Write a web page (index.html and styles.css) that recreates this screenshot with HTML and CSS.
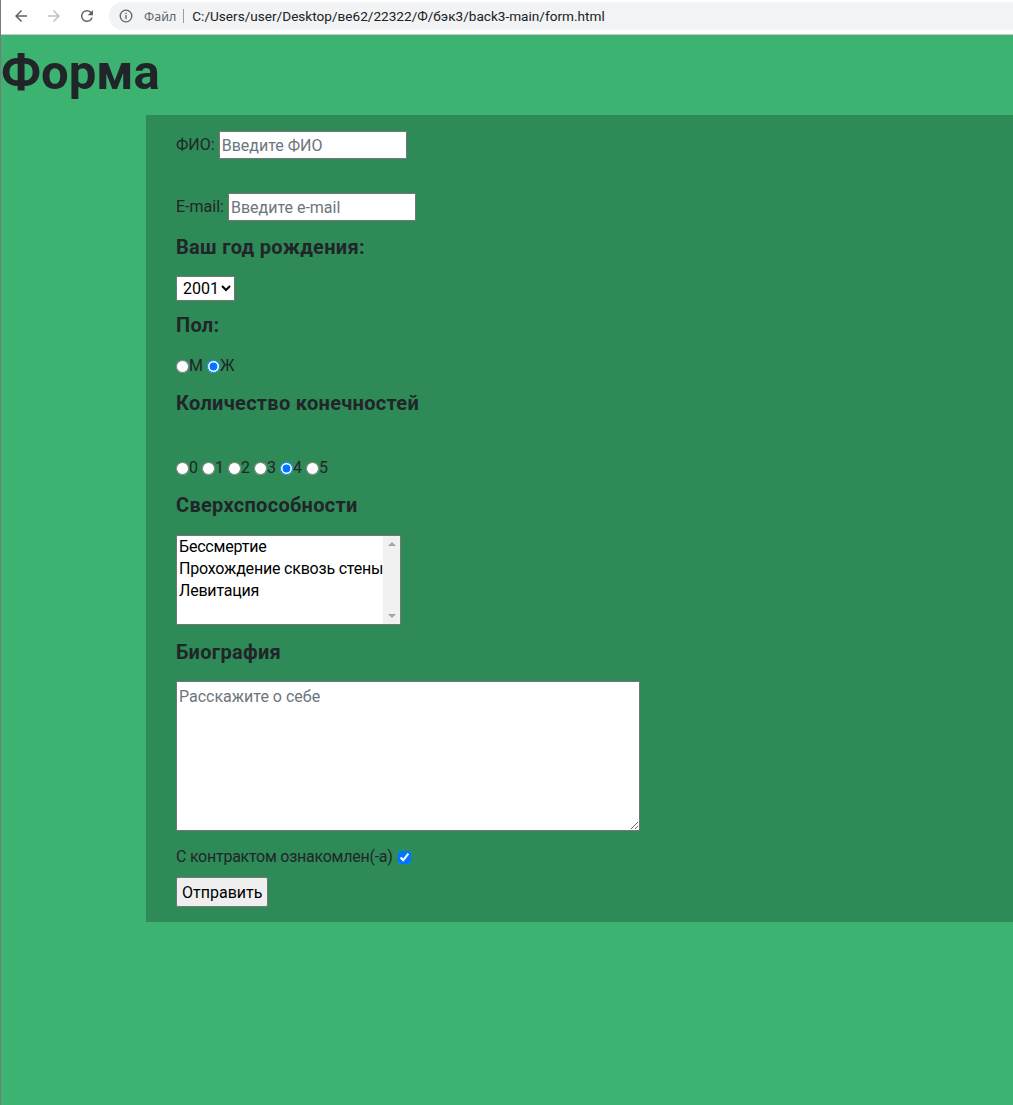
FILE: index.html
```html
<!DOCTYPE html>
<html lang="ru">
<head>
<meta charset="utf-8">
<title>Форма</title>
<link rel="stylesheet" href="styles.css">
</head>
<body>
<header class="toolbar">
  <div class="nav">
    <span class="nav-btn">
      <svg width="16" height="16" viewBox="0 0 16 16"><path d="M14 7.25H4.87l4.2-4.2L8 2 2 8l6 6 1.06-1.06-4.19-4.19H14z" fill="#5f6368"/></svg>
    </span>
    <span class="nav-btn">
      <svg width="16" height="16" viewBox="0 0 16 16"><path d="M2 7.25h9.13l-4.2-4.2L8 2l6 6-6 6-1.06-1.06 4.19-4.19H2z" fill="#bdc1c6"/></svg>
    </span>
    <span class="nav-btn">
      <svg width="16" height="16" viewBox="0 0 16 16"><path d="M12.24 3.76A5.97 5.97 0 0 0 8 2a6 6 0 1 0 5.8 7.5h-1.56A4.5 4.5 0 1 1 8 3.5c1.24 0 2.35.52 3.16 1.34L8.75 7.25H14V2z" fill="#5f6368"/></svg>
    </span>
  </div>
  <div class="omnibox">
    <svg class="info" width="14" height="14" viewBox="0 0 14 14"><circle cx="7" cy="7" r="5.8" fill="none" stroke="#5f6368" stroke-width="1.3"/><rect x="6.35" y="6" width="1.3" height="4" fill="#5f6368"/><rect x="6.35" y="3.8" width="1.3" height="1.3" fill="#5f6368"/></svg>
    <span class="scheme">Файл</span>
    <span class="sep"></span>
    <span class="url">C:/Users/user/Desktop/ве62/22322/Ф/бэк3/back3-main/form.html</span>
  </div>
</header>
<main class="page">
  <h1 class="title">Форма</h1>
  <form class="panel">
    <div class="field">
      <label class="lbl" for="fio">ФИО:</label>
      <input class="text-input" id="fio" type="text" placeholder="Введите ФИО">
    </div>
    <div class="field field-email">
      <label class="lbl" for="email">E-mail:</label>
      <input class="text-input" id="email" type="email" placeholder="Введите e-mail">
    </div>
    <h5 class="section h-year">Ваш год рождения:</h5>
    <select class="year">
      <option>2001</option>
    </select>
    <h5 class="section h-sex">Пол:</h5>
    <div class="radios r-sex">
      <label class="opt"><input type="radio" name="sex">М</label>
      <label class="opt"><input type="radio" name="sex" checked>Ж</label>
    </div>
    <h5 class="section h-limbs">Количество конечностей</h5>
    <div class="radios r-limbs">
      <label class="opt"><input type="radio" name="limbs">0</label>
      <label class="opt"><input type="radio" name="limbs">1</label>
      <label class="opt"><input type="radio" name="limbs">2</label>
      <label class="opt"><input type="radio" name="limbs">3</label>
      <label class="opt"><input type="radio" name="limbs" checked>4</label>
      <label class="opt"><input type="radio" name="limbs">5</label>
    </div>
    <h5 class="section h-powers">Сверхспособности</h5>
    <div class="listbox" role="listbox" aria-multiselectable="true">
      <div class="options">
        <div class="option" role="option">Бессмертие</div>
        <div class="option" role="option">Прохождение сквозь стены</div>
        <div class="option" role="option">Левитация</div>
      </div>
      <div class="scrollbar">
        <span class="arrow-up"></span>
        <span class="arrow-down"></span>
      </div>
    </div>
    <h5 class="section h-bio">Биография</h5>
    <textarea class="bio" placeholder="Расскажите о себе"></textarea>
    <div class="agree">
      <label class="agree-lbl">С контрактом ознакомлен(-а) <input type="checkbox" checked></label>
    </div>
    <button class="submit" type="button">Отправить</button>
  </form>
</main>
</body>
</html>
```
FILE: styles.css
```css
* { box-sizing: border-box; }

html, body {
  margin: 0;
  padding: 0;
}

body {
  border-left: 1px solid #7a7a7a;
  background: #3cb371;
  font-family: Roboto, "Noto Sans", sans-serif;
  color: #212529;
  min-height: 1105px;
}

/* Browser toolbar */
.toolbar {
  height: 35px;
  background: #ffffff;
  border-bottom: 1px solid #c9c9c9;
  display: flex;
  align-items: flex-start;
}

.nav {
  display: flex;
  padding-left: 12px;
  padding-top: 7px;
}

.nav-btn {
  width: 33px;
  height: 18px;
  display: flex;
  align-items: center;
  justify-content: flex-start;
}

.nav-btn:last-child { width: 30px; }

.omnibox {
  margin-top: 2px;
  flex: 1;
  height: 28px;
  background: #f1f3f4;
  border-radius: 14px 0 0 14px;
  display: flex;
  align-items: center;
  padding-left: 10px;
  font-family: "Noto Sans", Roboto, sans-serif;
  font-size: 13px;
}

.info { display: block; }

.scheme {
  color: #5f6368;
  margin-left: 11px;
  font-size: 12.5px;
}

.sep {
  width: 1px;
  height: 14px;
  background: #9aa0a6;
  margin: 0 8px 0 7px;
}

.url {
  color: #202124;
  font-family: Roboto, sans-serif;
  font-size: 13.6px;
}

/* Page */
.page {
  background: #3cb371;
}

.title {
  margin: 0;
  padding-top: 11px;
  height: 80px;
  font-size: 49px;
  line-height: 54px;
  font-weight: 700;
  color: #212529;
}

.panel {
  margin-left: 145px;
  background: #2e8b57;
  padding: 16px 0 15px 30px;
  font-size: 16px;
}

.field {
  display: flex;
  align-items: center;
  height: 28px;
}

.field-email { margin-top: 34px; }

.lbl {
  line-height: 20px;
  margin-right: 4px;
}

.text-input {
  width: 188px;
  height: 28px;
  border: 1px solid #767676;
  padding: 1px 2px;
  font-family: Roboto, sans-serif;
  font-size: 16px;
  background: #fff;
  color: #212529;
  outline: none;
}

.text-input::placeholder,
.bio::placeholder {
  color: #6c757d;
}

.section {
  margin: 0;
  font-size: 20px;
  line-height: 24px;
  letter-spacing: 0.3px;
  font-weight: 700;
  color: #212529;
}

.h-year { margin-top: 14px; }
.h-sex { margin-top: 12px; }
.h-limbs { margin-top: 15px; }
.h-powers { margin-top: 15px; }
.h-bio { margin-top: 15px; }

.year {
  display: block;
  margin-top: 17px;
  width: 59px;
  height: 25px;
  font-family: Roboto, sans-serif;
  font-size: 16px;
  color: #000;
  background: #fff;
  border: 1px solid #767676;
  padding: 0 0 0 2px;
}

.radios {
  display: flex;
  align-items: center;
  height: 20px;
  line-height: 20px;
}

.r-sex { margin-top: 19px; }
.r-limbs { margin-top: 43px; }

.opt {
  display: inline-flex;
  align-items: center;
  margin-right: 4px;
}

.opt input {
  margin: 0;
  width: 13px;
  height: 13px;
}

.listbox {
  margin-top: 18px;
  width: 225px;
  height: 90px;
  border: 1px solid #767676;
  background: #fff;
  display: flex;
}

.options {
  flex: 1;
  min-width: 0;
  overflow: hidden;
  padding-left: 2px;
  color: #000;
}

.option {
  line-height: 22px;
  white-space: nowrap;
  letter-spacing: -0.2px;
}

.scrollbar {
  flex: 0 0 17px;
  width: 17px;
  background: #f1f1f1;
  display: flex;
  flex-direction: column;
  justify-content: space-between;
  align-items: center;
  padding: 6px 0 6px;
}

.arrow-up {
  width: 0;
  height: 0;
  border-left: 4px solid transparent;
  border-right: 4px solid transparent;
  border-bottom: 4px solid #a3a3a3;
}

.arrow-down {
  width: 0;
  height: 0;
  border-left: 4px solid transparent;
  border-right: 4px solid transparent;
  border-top: 4px solid #a3a3a3;
}

.bio {
  display: block;
  margin-top: 17px;
  width: 464px;
  height: 150px;
  border: 1px solid #767676;
  padding: 3px 2px 2px;
  font-family: Roboto, sans-serif;
  font-size: 16px;
  line-height: 24px;
  background: #fff;
  outline: none;
}

.agree {
  margin-top: 16px;
  height: 20px;
  display: flex;
  align-items: center;
}

.agree-lbl {
  display: inline-flex;
  align-items: center;
  white-space: pre;
  line-height: 20px;
  letter-spacing: -0.25px;
}

.agree-lbl input {
  margin: 0 0 0 2px;
  width: 13px;
  height: 13px;
}

.submit {
  display: block;
  margin-top: 10px;
  height: 30px;
  padding: 0 5px;
  font-family: Roboto, sans-serif;
  font-size: 16px;
  color: #000;
  background: #efefef;
  border: 1px solid #767676;
  border-radius: 2px;
}
```
